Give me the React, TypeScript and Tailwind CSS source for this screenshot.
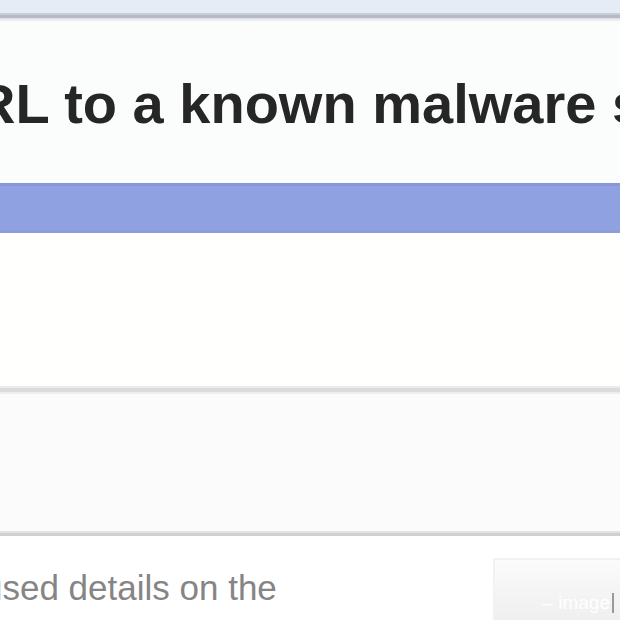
export default function App() {
  return (
    <div
      className="w-[620px] h-[620px] overflow-hidden flex flex-col bg-white"
      style={{ fontFamily: '"Liberation Sans", Arial, sans-serif' }}
    >
      <div className="h-[13px] shrink-0 bg-[#e6ecf6]" />
      <div className="h-[2px] shrink-0 bg-[#c9cdd6]" />
      <div className="h-[3px] shrink-0 bg-[#b6bac4]" />
      <div className="h-[4px] shrink-0 bg-gradient-to-b from-[#d9dde4] to-[#fbfdfd]" />
      <div className="h-[161px] shrink-0 bg-[#fbfdfd] overflow-hidden">
        <div className="mt-[54px] ml-[-25px] whitespace-nowrap text-[56px] leading-[56px] font-bold text-[#262626]">
          RL to a known malware site
        </div>
      </div>
      <div className="h-[50px] shrink-0 flex flex-col">
        <div className="h-[3px] bg-[#8796d6]" />
        <div className="flex-1 bg-[#8fa1e1]" />
        <div className="h-[3px] bg-[#8c9cdc]" />
      </div>
      <div className="h-[153px] shrink-0 bg-[#fffffd]" />
      <div className="h-[2px] shrink-0 bg-[#ececec]" />
      <div className="h-[4px] shrink-0 bg-[#dbdbdb]" />
      <div className="h-[2px] shrink-0 bg-[#eeeeee]" />
      <div className="h-[137px] shrink-0 bg-[#fbfbfb]" />
      <div className="h-[2px] shrink-0 bg-[#e2e2e2]" />
      <div className="h-[3px] shrink-0 bg-[#d0d0d0]" />
      <div className="flex-1 flex bg-white">
        <div className="flex-1 overflow-hidden">
          <div className="mt-[32px] ml-[-17px] whitespace-nowrap text-[35px] leading-[40px] text-[#858585]">
            used details on the
          </div>
        </div>
        <div className="w-[127px] shrink-0 mt-[22px] border-l-2 border-t-2 border-[#f2f2f2] bg-gradient-to-b from-[#fbfbfb] to-[#efefef] flex flex-col">
          <div className="flex-1" />
          <div className="flex items-center justify-end pr-[6px] pb-[7px]">
            <span className="text-[19px] leading-[20px] text-white">– image</span>
            <span className="ml-[2px] w-[2px] h-[20px] bg-[#9a9a9a]" />
          </div>
        </div>
      </div>
    </div>
  );
}
